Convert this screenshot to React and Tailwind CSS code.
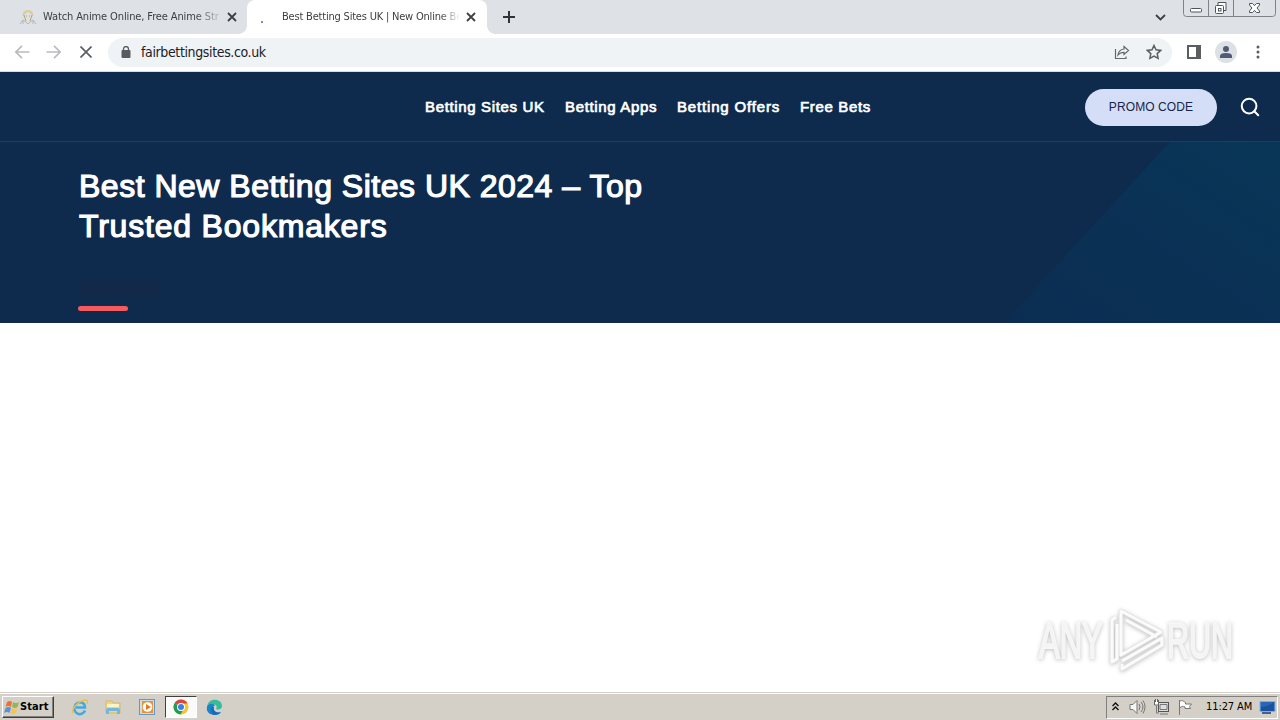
import { Search } from 'lucide-react';

const navLinks = [
  { label: 'Betting Sites UK', width: 'w-[120px]' },
  { label: 'Betting Apps', width: 'w-[92px]' },
  { label: 'Betting Offers', width: 'w-[103px] tracking-[0.83px]' },
  { label: 'Free Bets', width: 'w-[71px]' }
];

const CloseIcon = ({ className }) => (
  <svg viewBox="0 0 10 10" className={className} fill="none" stroke="currentColor">
    <path d="M1 1l8 8M9 1L1 9" />
  </svg>
);

function AnimeFavicon() {
  return (
    <svg width="18" height="18" viewBox="0 0 18 18" fill="none">
      <path d="M4 9C3 5 5 2 9 2s6 3 5 7l-2-3-3-2-3 2-2 3z" fill="#dccb9c" />
      <path d="M5 7l2 6M13 7l-2 6M7 8h1M10 8h1" stroke="#b7a477" />
      <path d="M1 16l3-4 3 2 2 2 2-2 3-2 3 4M4 12v4M14 12v4" stroke="#b3b5ba" />
    </svg>
  );
}

function TabStrip() {
  return (
    <div className="flex h-[34px] shrink-0 bg-[#dee1e6]">
      <div className="flex h-full w-[247px] items-center pl-[19px]">
        <AnimeFavicon />
        <div className="mt-px ml-[6px] w-[177px] whitespace-nowrap text-[11px] tracking-[-0.12px] text-[#3c4043] [mask-image:linear-gradient(to_right,black_152px,transparent_182px)]">
          Watch Anime Online, Free Anime Str
        </div>
        <CloseIcon className="ml-[7px] size-[10px] stroke-[1.8] text-[#3c4043]" />
      </div>
      <div className="relative flex h-full w-[240px] items-center rounded-t-[8px] bg-white pl-[14px]">
        <div className="absolute bottom-0 -left-2 size-2 bg-[radial-gradient(circle_at_0_0,transparent_7.5px,white_8px)]" />
        <div className="absolute -right-2 bottom-0 size-2 bg-[radial-gradient(circle_at_100%_0,transparent_7.5px,white_8px)]" />
        <div className="mt-[9px] size-[2px] rounded-full bg-[#5369a5]" />
        <div className="mt-px ml-[19px] w-[177px] whitespace-nowrap text-[11px] tracking-[-0.2px] text-[#3c4043] [mask-image:linear-gradient(to_right,black_158px,transparent_178px)]">
          Best Betting Sites UK | New Online Be
        </div>
        <CloseIcon className="ml-[7px] size-[10px] stroke-[1.8] text-[#3c4043]" />
      </div>
      <svg className="mt-[11px] ml-[16px] size-[12px] text-[#303338]" viewBox="0 0 12 12" stroke="currentColor" strokeWidth="2">
        <path d="M6 0v12M0 6h12" />
      </svg>
      <svg className="mt-[14px] ml-auto h-[7px] w-[11px]" viewBox="0 0 11 7" fill="none" stroke="#3c4043" strokeWidth="1.8">
        <path d="M1 1l4.500 4.500L10 1" />
      </svg>
      <WindowButtons />
    </div>
  );
}

function WindowButtons() {
  return (
    <svg className="mr-[4px] ml-[17px] h-[17px] w-[93px]" viewBox="0 0 93 17" fill="none" stroke="#7f838a">
      <path d="M.5 0v13.500q0 3 3 3h86q3 0 3-3V0M25.500 0v16M50.500 0v16" />
      <g stroke="#50555d">
        <rect x="7.500" y="8.500" width="11" height="3.500" rx="1" fill="#fff" />
        <path d="M35 5V2.500h8v8h-2.500" fill="#fff" />
        <rect x="32.500" y="5.500" width="8" height="8" rx="1" fill="#fff" />
        <rect x="35.500" y="8.500" width="2.500" height="2.500" />
        <path d="M66.500 3.500h3l2 2.200 2-2.200h3v1.500L74 8l2.500 3v1.500h-3l-2-2.200-2 2.200h-3V11L69 8l-2.500-3z" fill="#fff" />
      </g>
    </svg>
  );
}

function Toolbar() {
  return (
    <div className="flex h-[38px] shrink-0 items-center border-b border-[#d5dce6] bg-white pb-px pl-[14px]">
      <svg className="h-[14px] w-[16px]" viewBox="0 0 16 14" fill="none" stroke="#b9bbbe" strokeWidth="1.7">
        <path d="M15.500 7H2M8 .8L1.800 7 8 13.200" />
      </svg>
      <svg className="ml-[16px] h-[14px] w-[16px]" viewBox="0 0 16 14" fill="none" stroke="#b9bbbe" strokeWidth="1.700">
        <path d="M.5 7H14M8 .8L14.200 7 8 13.200" />
      </svg>
      <svg className="ml-[18px] size-[12px]" viewBox="0 0 12 12" fill="none" stroke="#5a5d61" strokeWidth="1.700">
        <path d="M.5 .5l11 11M11.500 .5l-11 11" />
      </svg>
      <div className="ml-[16px] flex h-[29px] w-[1064px] items-center rounded-full bg-[#f0f3f5] pl-[13px]">
        <svg className="mb-px h-[12px] w-[10px]" viewBox="0 0 10 12" fill="none">
          <rect x=".5" y="4" width="9" height="8" rx="1" fill="#575b60" />
          <path d="M2.500 5V3a2.500 2.500 0 015 0v2" stroke="#575b60" strokeWidth="1.300" />
        </svg>
        <div className="mt-px ml-[10px] text-[14px] tracking-[-0.37px] text-[#202124]">fairbettingsites.co.uk</div>
        <svg className="ml-auto h-[15px] w-[16px]" viewBox="0 0 16 15" fill="none" stroke="#64686c" strokeWidth="1.200">
          <path d="M1.500 4v9.500h10.500V11.500" />
          <path d="M10 1.500l4.500 4-4.500 4V7.300C7 7.300 5.300 8.300 4 10c.4-3.500 2.300-5.600 6-6z" />
        </svg>
        <svg className="mr-[10px] ml-[16px] size-[16px]" viewBox="0 0 16 16" fill="none" stroke="#5b5f63" strokeWidth="1.500">
          <path d="M8 1.500l2 4.300 4.700.6-3.500 3.200.9 4.700L8 12l-4.100 2.300.9-4.700-3.500-3.200 4.700-.6z" />
        </svg>
      </div>
      <svg className="ml-[15px] h-[14px] w-[14px]" viewBox="0 0 14 14">
        <rect x="1" y="1" width="12" height="12" fill="none" stroke="#5b5d62" strokeWidth="2" />
        <path d="M9 1h4v12H9z" fill="#5b5d62" />
      </svg>
      <div className="ml-[14px] flex size-[22px] items-center justify-center rounded-full bg-[#dde1e5]">
        <svg width="12" height="12" viewBox="0 0 12 12" fill="#505b76">
          <circle cx="6" cy="3" r="3" />
          <path d="M0 12v-2q0-3 6-3t6 3v2z" />
        </svg>
      </div>
      <svg className="ml-[19px] h-[14px] w-[4px]" viewBox="0 0 4 14" fill="#5b5d62">
        <circle cx="2" cy="2" r="1.500" />
        <circle cx="2" cy="7" r="1.500" />
        <circle cx="2" cy="12" r="1.500" />
      </svg>
    </div>
  );
}

function SiteHeader() {
  return (
    <header className="flex h-[70px] shrink-0 items-center border-b border-[#243a60] bg-[#0e2b4e]">
      <nav className="mt-[2px] ml-[425px] flex gap-[20px] font-['Liberation_Sans',Arial,sans-serif] text-[15px] tracking-[0.65px] text-white [-webkit-text-stroke:0.7px_white]">
        {navLinks.map((link) => (
          <a key={link.label} className={`whitespace-nowrap ${link.width}`}>{link.label}</a>
        ))}
      </nav>
      <button className="mt-px ml-auto h-[37px] w-[132px] rounded-full bg-[#d5def7] font-['Liberation_Sans',Arial,sans-serif] text-[12px] tracking-[0.1px] text-[#17254b]">
        PROMO CODE
      </button>
      <Search className="mt-px mr-[19px] ml-[22px] size-[22px] text-white" strokeWidth={2.2} />
    </header>
  );
}

function Hero() {
  return (
    <section className="relative h-[181px] shrink-0 bg-[#0e2b4e] pt-[24px] pl-[78px]">
      <div className="absolute inset-y-0 right-0 w-[276px] bg-linear-to-bl from-[#093658] to-[#0b2d52] [clip-path:polygon(166px_0,100%_0,100%_100%,0_100%)]" />
      <h1 className="h-[80px] w-[600px] pl-px font-['Liberation_Sans',Arial,sans-serif] text-[32px] leading-[40px] font-normal whitespace-nowrap text-white [-webkit-text-stroke:1.2px_white]">
        <span className="tracking-[0.5px]">Best New Betting Sites UK 2024 – Top</span>
        <br />
        <span className="tracking-[0.8px]">Trusted Bookmakers</span>
      </h1>
      <div className="mt-[35px] ml-[2px] h-[16px] w-[80px] bg-[#12294a]" />
      <div className="mt-[9px] h-[5px] w-[50px] rounded-full bg-[#f35b5f]" />
    </section>
  );
}

function Watermark() {
  return (
    <svg className="mr-[38px] mb-[15px] h-[70px] w-[210px] overflow-visible drop-shadow-[0_1px_2px_rgba(0,0,0,0.25)]" viewBox="0 0 210 70">
      <g fill="#f4f4f4" stroke="#f6f6f6" strokeWidth="2" fontFamily="'Liberation Sans', Arial, sans-serif" fontSize="50">
        <text transform="translate(7 51) scale(.62 1)">ANY</text>
        <text transform="translate(135 51) scale(.61 1)">RUN</text>
      </g>
      <g fill="none" strokeLinejoin="round">
        <path d="M84 10l-4 3v42l5-3V17M89 4v44l40-23L89 4zM94 13l31 17M90 57v5l40-24v-7L90 54" stroke="#dedede" strokeWidth="4" />
        <path d="M84 10l-4 3v42l5-3V17M89 4v44l40-23L89 4zM94 13l31 17M90 57v5l40-24v-7L90 54" stroke="#fbfbfb" strokeWidth="3" />
      </g>
    </svg>
  );
}

function StartLogo() {
  return (
    <svg width="16" height="16" viewBox="0 0 16 16">
      <path d="M3 3q3-2 5 0L7 8Q4 6 1.500 8z" fill="#ed713c" />
      <path d="M9 3q3 2 6 0l-1.500 5Q11 10 8 8z" fill="#91b75b" />
      <path d="M1.500 9q3-2 5.500 0l-1.500 5Q3 12 0 14z" fill="#5b91d5" />
      <path d="M8 9q3 2 5.500 0L12 14q-3 2-5.500 0z" fill="#f6c64b" />
    </svg>
  );
}

function Taskbar() {
  return (
    <footer className="flex h-[28px] shrink-0 items-center border-t border-[#d4d0c8] bg-[#d4d0c8] shadow-[inset_0_1px_0_#fff]">
      <button className="mt-px ml-[2px] flex h-[22px] w-[52px] items-center border border-t-white border-r-[#404040] border-b-[#404040] border-l-white pl-[1px] text-[11px] font-bold tracking-[0.1px] text-black shadow-[inset_-1px_-1px_0_#808080]">
        <StartLogo />
        <span>Start</span>
      </button>
      <svg className="ml-[17px] size-[18px]" viewBox="0 0 18 18" fill="none">
        <path d="M14 12.500A5.500 5.500 0 114 8c1-5 10-5 10 1.500H5" stroke="#43a8dd" strokeWidth="2.500" />
        <path d="M2 15C-1 14 6 3 14 2c3 0 3 1 2 4" stroke="#e5bf52" strokeWidth="1.300" />
      </svg>
      <svg className="ml-[15px] size-[18px]" viewBox="0 0 18 18">
        <path d="M2 3h6l1 2h7v10H2z" fill="#f1d681" stroke="#d2ad55" strokeWidth=".7" />
        <path d="M3 6h12v3H3z" fill="#fff4c6" />
        <path d="M2 16v-4q0-2 2-2h10q2 0 2 2v4h-3v-3H5v3z" fill="#72b8de" />
      </svg>
      <svg className="ml-[16px] size-[18px]" viewBox="0 0 18 18">
        <rect x="1.500" y="1.500" width="15" height="15" fill="#c6def2" stroke="#5f9acb" />
        <rect x="4" y="3" width="11" height="12" fill="#f09130" />
        <circle cx="9.500" cy="9" r="4.800" fill="#fff" />
        <path d="M8 6l5 3-5 3z" fill="#e87819" />
      </svg>
      <div className="mt-px ml-[9px] flex h-[22px] w-[32px] items-center justify-center border border-t-[#404040] border-r-white border-b-white border-l-[#404040] bg-[#fafafa]">
        <svg width="16" height="16" viewBox="0 0 16 16">
          <circle cx="8" cy="8" r="7.500" fill="#f6c62e" />
          <path d="M8 8L1.500 4.200A7.500 7.500 0 0114.500 4.200L8 5z" fill="#dc4639" />
          <path d="M1.500 4.200A7.500 7.500 0 007.500 15.500L11 9.500 8 8z" fill="#249b54" />
          <circle cx="8" cy="8" r="4" fill="#fff" />
          <circle cx="8" cy="8" r="3" fill="#397eea" />
        </svg>
      </div>
      <svg className="mt-px ml-[9px] size-[17px]" viewBox="0 0 17 17">
        <path d="M1 9C1-2 16-1 16 7c0 4-5 4-6 3 3-5-5-7-9-1z" fill="#35bd9b" />
        <path d="M1 9c0 5 4 7 8 7 3 0 5-1 6-3-5 1-8-1-7-5C5 5 2 6 1 9z" fill="#1769bd" />
        <path d="M1 8C3 4 8 4 9 7c-4-1-5 5-2 8-4-1-7-3-6-7z" fill="#1784cc" />
      </svg>
      <Tray />
    </footer>
  );
}

function Tray() {
  return (
    <div className="mt-px mr-[2px] ml-auto flex h-[23px] w-[172px] items-center border border-t-[#808080] border-r-white border-b-white border-l-[#808080] pl-[5px]">
      <svg className="mb-[2px] h-[9px] w-[7px]" viewBox="0 0 7 9" fill="none" stroke="#111" strokeWidth="1.400">
        <path d="M.5 4l3-3 3 3M.5 8l3-3 3 3" />
      </svg>
      <svg className="ml-[10px] h-[16px] w-[17px]" viewBox="0 0 17 16" fill="none" stroke="#777">
        <path d="M1 5.500h3l4-4v13l-4-4H1z" fill="#f6f6f6" />
        <path d="M10 5q2 3 0 6M12 3q4 5 0 10M14 1.500q4 6 0 13" />
      </svg>
      <svg className="ml-[7px] h-[16px] w-[17px]" viewBox="0 0 17 16" fill="none" stroke="#686868">
        <rect x="5.500" y="3.500" width="10" height="9" fill="#ddd" stroke="#555" />
        <path d="M7 5.500h7v5H7zM7 15h8M3.500 7v7H6" stroke="#777" />
        <path d="M1.500 1v5h4V1M2.500 0v3M4.500 0v3" fill="#fff" />
      </svg>
      <svg className="ml-[7px] h-[16px] w-[17px]" viewBox="0 0 17 16" fill="#fff" stroke="#777">
        <path d="M2.500 1v15M2.500 2.500c3-2 4 0 6 1v1.500h6l-2 2.500 1 2H8V8C6 7 5 7 2.500 9z" />
      </svg>
      <div className="ml-[12px] w-[49px] text-[11px] tracking-[-0.1px] whitespace-nowrap text-black">11:27 AM</div>
      <svg className="ml-[4px] h-[16px] w-[17px]" viewBox="0 0 17 16">
        <path d="M1 2.500h15v10H1z" fill="#2766b8" stroke="#80aee2" />
        <path d="M2 8q7 0 13-5v9H2z" fill="#1b519d" />
        <path d="M3 14h9" stroke="#42628e" strokeWidth="2" />
      </svg>
    </div>
  );
}

export default function App() {
  return (
    <div className="flex h-[720px] w-[1280px] flex-col overflow-hidden bg-white font-['DejaVu_Sans_Condensed','DejaVu_Sans',sans-serif]">
      <TabStrip />
      <Toolbar />
      <SiteHeader />
      <Hero />
      <main className="flex min-h-0 flex-1 items-end justify-end">
        <Watermark />
      </main>
      <Taskbar />
    </div>
  );
}
